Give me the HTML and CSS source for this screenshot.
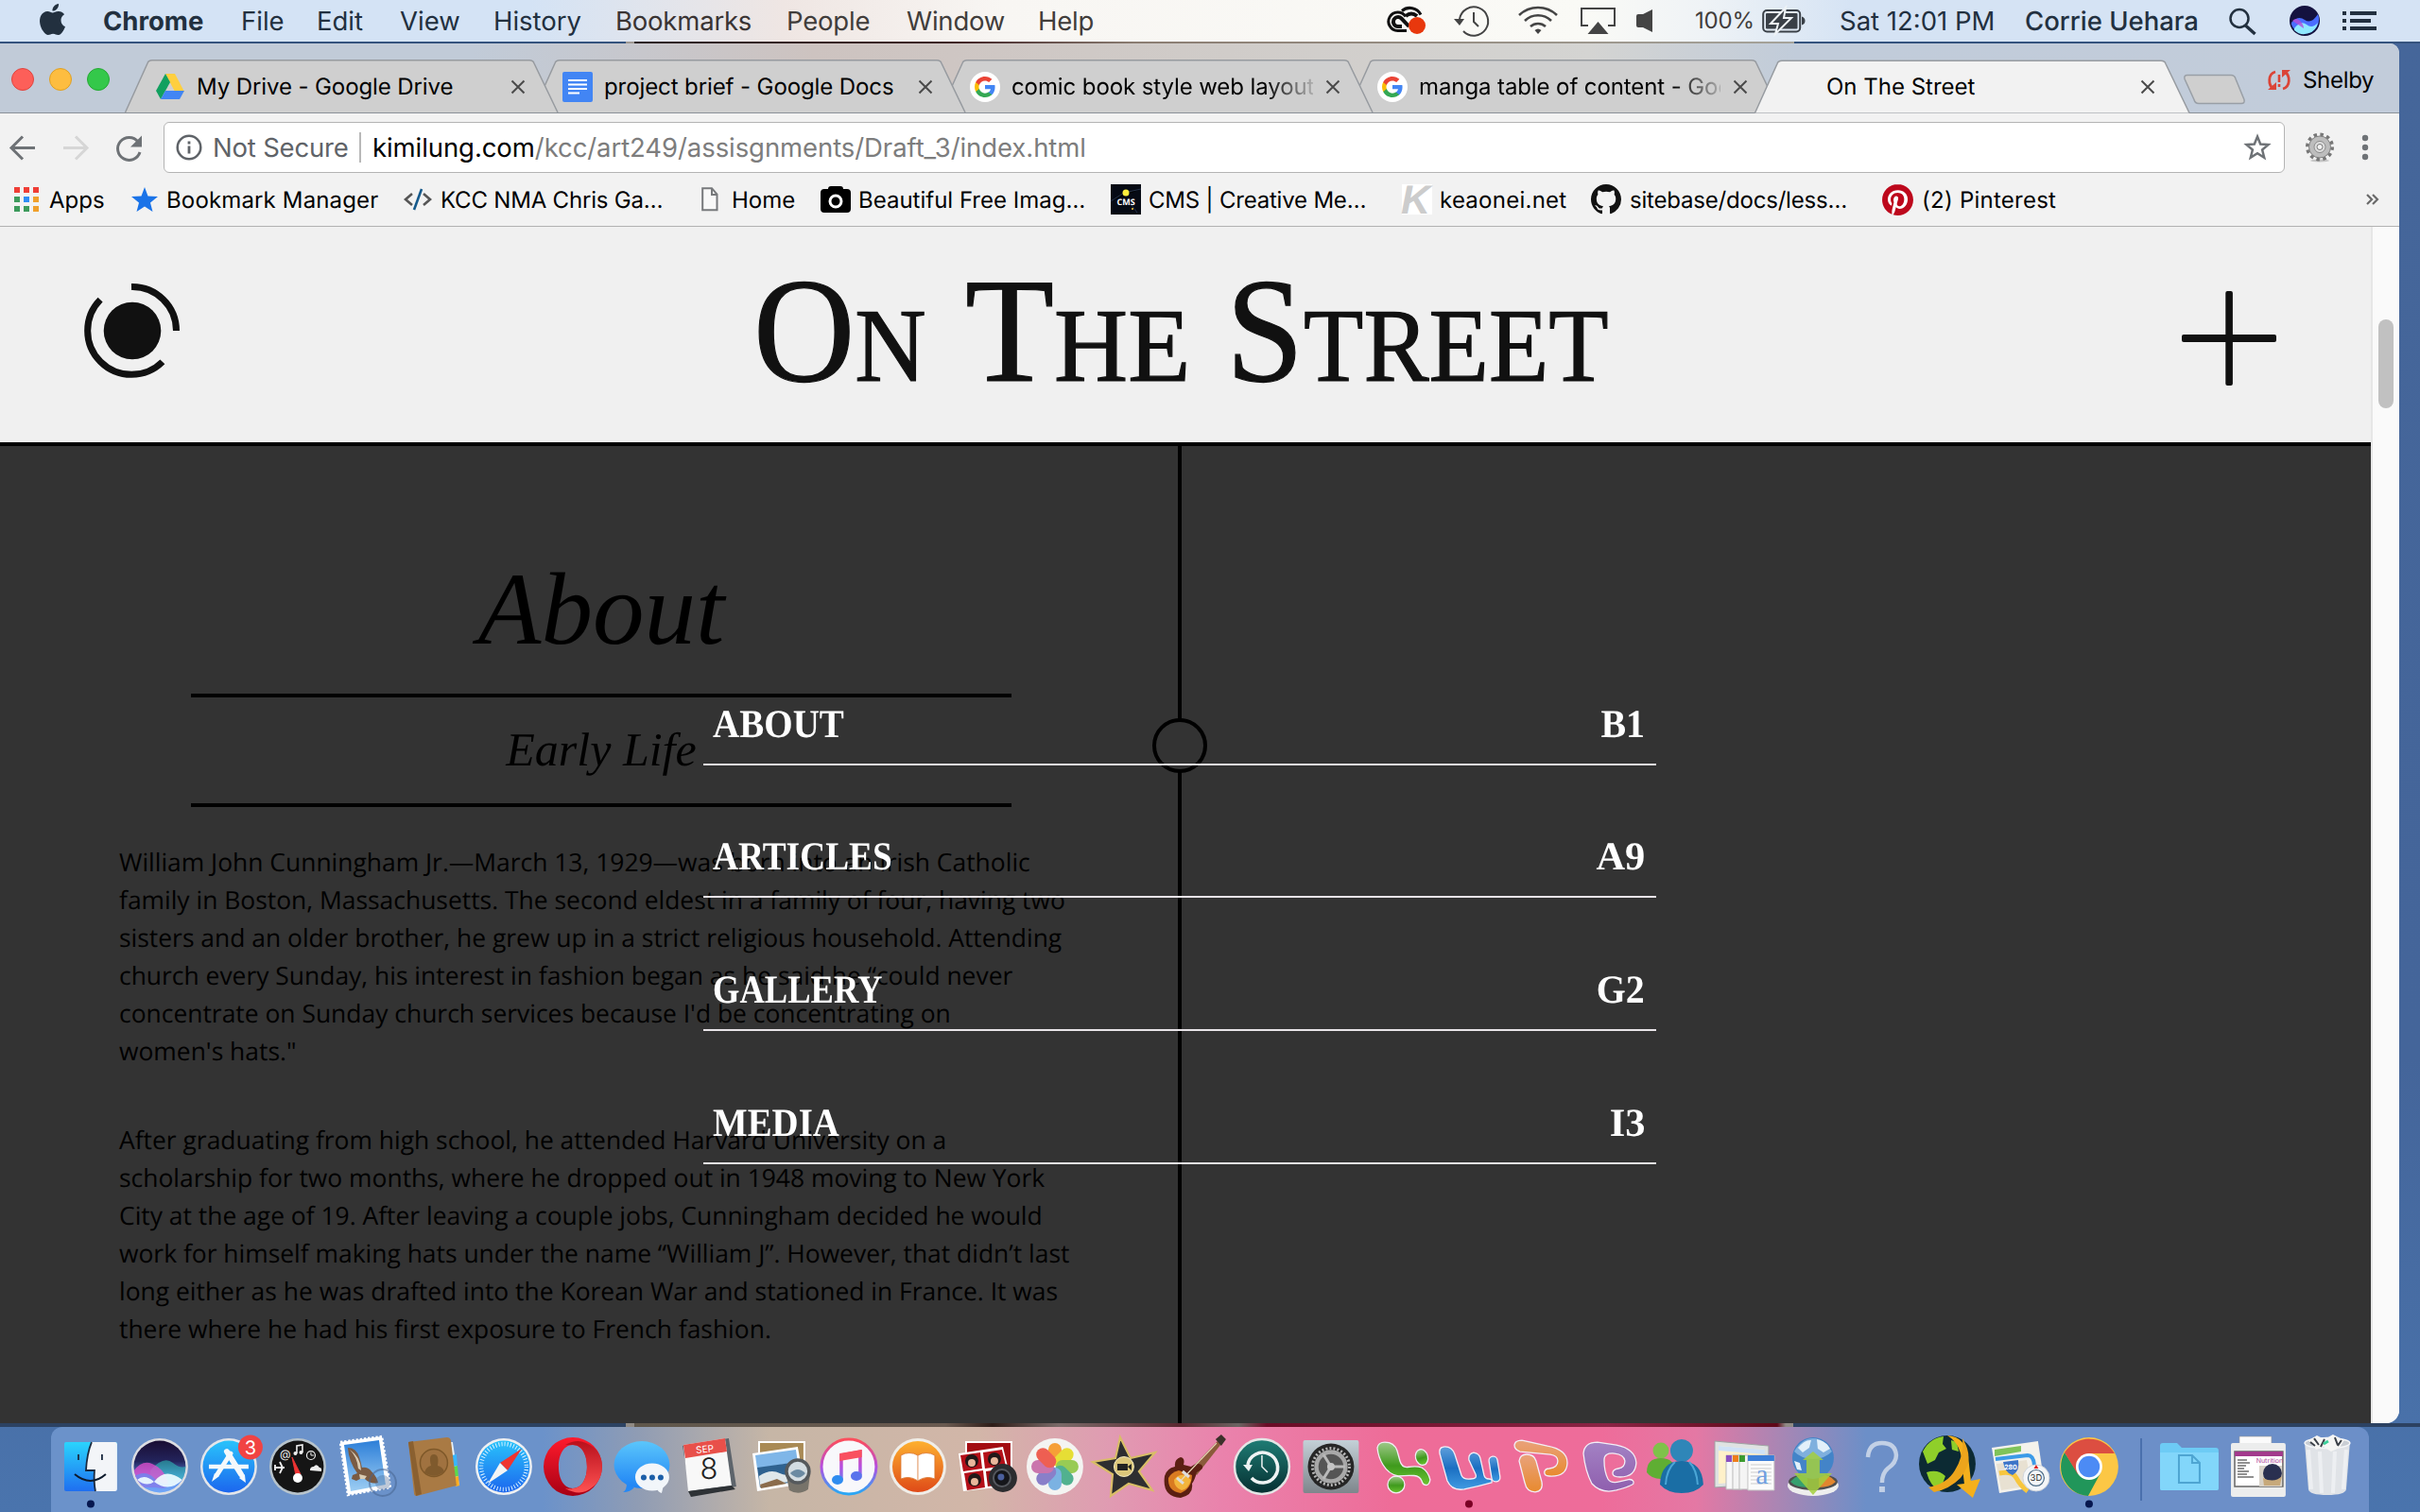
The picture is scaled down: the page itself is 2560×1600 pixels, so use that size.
FILE: index.html
```html
<!DOCTYPE html>
<html lang="en">
<head>
<meta charset="utf-8">
<title>On The Street</title>
<link rel="stylesheet" href="styles.css">
</head>
<body>
<div class="desktop">
  <header class="menubar">
    <svg class="apple" viewBox="2.3 0 19.4 24" width="27" height="33"><path fill="#22303f" d="M12.152 6.896c-.948 0-2.415-1.078-3.96-1.04-2.04.027-3.91 1.183-4.961 3.014-2.117 3.675-.546 9.103 1.519 12.09 1.013 1.454 2.208 3.09 3.792 3.039 1.52-.065 2.09-.987 3.935-.987 1.831 0 2.35.987 3.96.948 1.637-.026 2.676-1.48 3.676-2.948 1.156-1.688 1.636-3.325 1.662-3.415-.039-.013-3.182-1.221-3.22-4.857-.026-3.04 2.48-4.494 2.597-4.559-1.429-2.09-3.623-2.324-4.39-2.376-2-.156-3.675 1.09-4.61 1.09zM15.53 3.83c.843-1.012 1.4-2.427 1.245-3.83-1.207.052-2.662.805-3.532 1.818-.78.896-1.454 2.338-1.273 3.714 1.338.104 2.715-.688 3.559-1.701"/></svg>
    <span class="app">Chrome</span><span>File</span><span>Edit</span><span>View</span><span>History</span><span class="mid">Bookmarks</span><span class="warm">People</span><span class="warm">Window</span><span class="warm">Help</span>
    <svg width="44" height="44" viewBox="0 0 44 44"><g fill="none" stroke="#111" stroke-width="3"><path d="M22 32.500H12.500A9.800 9.800 0 1 1 21 17.500"/><path d="M17 11.500a13 13 0 0 1 20 4"/><path d="M21 17q6-5 12 0" stroke-width="4"/><path d="M17 28h-4a5 5 0 1 1 3.500-8.500l8 8.500" stroke-width="4"/></g><circle cx="33" cy="27" r="9" fill="#e8380d"/></svg>
    <svg width="44" height="44" viewBox="0 0 44 44"><path d="M7 20a15.200 15.200 0 1 1 4 13" fill="none" stroke="#444" stroke-width="2"/><path d="M1 20h11l-5 7z" fill="#444"/><path d="M22 13v10l5 5" fill="none" stroke="#444" stroke-width="2"/></svg>
    <svg width="44" height="44" viewBox="0 0 44 44"><g fill="none" stroke="#444" stroke-width="2.600"><path d="M2 16a29 29 0 0 1 40 0M8 22a20 20 0 0 1 28 0M14 28a12 12 0 0 1 16 0"/></g><path d="M18.500 32q3.500-3 7 0L22 36z" fill="#444"/></svg>
    <svg width="44" height="44" viewBox="0 0 44 44"><path d="M9 27H2V9h35v18h-7" fill="none" stroke="#444" stroke-width="2"/><path d="M19.500 23l11 13h-22z" fill="#444"/></svg>
    <svg width="24" height="44" viewBox="0 0 24 44"><path d="M0 17q0-2 2-2h5l10-5v24l-10-5H2q-2 0-2-2z" fill="#444"/></svg>
    <span class="pct">100%</span>
    <svg width="48" height="44" viewBox="0 0 48 44"><rect x="1.200" y="11" width="39" height="22.500" rx="4" fill="none" stroke="#3a4047" stroke-width="2"/><rect x="4" y="14" width="33.500" height="16.500" rx="1" fill="#3a4047"/><path d="M25 8L9 25h8l-3 11 17-17h-8z" fill="#3a4047" stroke="#eff3f6" stroke-width="2"/><path d="M42 17.500q3.500 1 3.500 4.500T42 26.500z" fill="#3a4047"/></svg>
    <span>Sat 12:01 PM</span><span class="user">Corrie Uehara</span>
    <svg width="36" height="44" viewBox="0 0 36 44"><circle cx="12" cy="19.500" r="9.500" fill="none" stroke="#22303f" stroke-width="2.500"/><path d="M18.500 27l10 9" stroke="#22303f" stroke-width="3.400"/></svg>
    <svg width="34" height="44" viewBox="0 0 34 44"><circle cx="16" cy="22" r="16" fill="#14123f"/><path d="M2 24q7-8 14-3t14-6a15 15 0 0 1-28 11z" fill="#4a6dff"/><path d="M5 30q7-9 13-4t12-2a15 15 0 0 1-25 8z" fill="#8fe8ff"/><path d="M3 22q4-4 8 0t4 8z" fill="#b44cd8" opacity=".8"/></svg>
    <svg width="40" height="44" viewBox="0 0 40 44"><path d="M0 14h4M0 22h4M0 30h4M8 14h28M8 22h22M8 30h28" stroke="#22303f" stroke-width="4"/></svg>
  </header>
  <div class="seam"></div>

  <div class="window">
    <div class="tabstrip">
      <div class="lights"><i class="red"></i><i class="yellow"></i><i class="green"></i></div>
      <div class="tab t1"><svg class="shape" viewBox="0 0 460 56"><path d="M.5 56L24 4Q25 .8 29 .8H428Q432 .8 433 4L458 56"/></svg>
        <svg class="fav" viewBox="0 0 32 32"><path d="M11 2h10l10 19H21z" fill="#ffcf3f"/><path d="M11 2L1 20l5 9 10-18z" fill="#11a05f"/><path d="M11 20h20l-5 9H6z" fill="#4285f4"/></svg>
        <span class="title">My Drive - Google Drive</span><svg class="close" viewBox="0 0 16 16"><path d="M1.500 1.500l13 13M14.500 1.500l-13 13"/></svg></div>
      <div class="tab t2"><svg class="shape" viewBox="0 0 460 56"><path d="M.5 56L24 4Q25 .8 29 .8H428Q432 .8 433 4L458 56"/></svg>
        <svg class="fav" viewBox="0 0 32 32"><rect width="32" height="32" rx="2" fill="#4285f4"/><path d="M6 9h20M6 13.500h20M6 18h20M6 22.500h12" stroke="#fff" stroke-width="2"/></svg>
        <span class="title">project brief - Google Docs</span><svg class="close" viewBox="0 0 16 16"><path d="M1.500 1.500l13 13M14.500 1.500l-13 13"/></svg></div>
      <div class="tab t3"><svg class="shape" viewBox="0 0 460 56"><path d="M.5 56L24 4Q25 .8 29 .8H428Q432 .8 433 4L458 56"/></svg>
        <svg class="fav" viewBox="-4 -4 32 32"><circle cx="12" cy="12" r="16" fill="#fff"/><use href="#g"/></svg>
        <span class="title fade">comic book style web layout</span><svg class="close" viewBox="0 0 16 16"><path d="M1.500 1.500l13 13M14.500 1.500l-13 13"/></svg></div>
      <div class="tab t4"><svg class="shape" viewBox="0 0 460 56"><path d="M.5 56L24 4Q25 .8 29 .8H428Q432 .8 433 4L458 56"/></svg>
        <svg class="fav" viewBox="-4 -4 32 32"><circle cx="12" cy="12" r="16" fill="#fff"/><g id="g"><path fill="#4285F4" d="M22.560 12.250c0-.78-.07-1.530-.2-2.250H12v4.260h5.920c-.26 1.370-1.040 2.530-2.210 3.310v2.770h3.570c2.080-1.920 3.280-4.740 3.280-8.090z"/><path fill="#34A853" d="M12 23c2.970 0 5.460-.98 7.280-2.660l-3.570-2.770c-.98.66-2.230 1.060-3.710 1.060-2.860 0-5.290-1.930-6.160-4.530H2.180v2.840C3.990 20.530 7.700 23 12 23z"/><path fill="#FBBC05" d="M5.840 14.090c-.22-.66-.35-1.360-.35-2.090s.13-1.430.35-2.090V7.070H2.180C1.430 8.550 1 10.220 1 12s.43 3.450 1.180 4.930l2.850-2.220.81-.62z"/><path fill="#EA4335" d="M12 5.380c1.620 0 3.060.56 4.210 1.640l3.150-3.150C17.450 2.090 14.970 1 12 1 7.700 1 3.990 3.470 2.180 7.070l3.660 2.840c.87-2.600 3.300-4.530 6.160-4.530z"/></g></svg>
        <span class="title fade">manga table of content - Goo</span><svg class="close" viewBox="0 0 16 16"><path d="M1.500 1.500l13 13M14.500 1.500l-13 13"/></svg></div>
      <div class="tab t5 active"><svg class="shape" viewBox="0 0 460 56"><path d="M.5 56L24 4Q25 .8 29 .8H430Q434 .8 435 4L460 56"/></svg>
        <span class="fav"></span>
        <span class="title">On The Street</span><svg class="close" viewBox="0 0 16 16"><path d="M1.500 1.500l13 13M14.500 1.500l-13 13"/></svg></div>
      <svg class="newtab" viewBox="0 0 68 34" width="68" height="34"><path d="M5 1.500h46q4 0 5 4l9 22q1 4-3 4H17q-4 0-5-4L2 5.500q-1-4 3-4z" fill="#cfcfcf" stroke="#999fa6" stroke-width="1.500"/></svg>
      <div class="profile"><svg viewBox="0 0 26 24" width="26" height="24"><g fill="none" stroke="#db4437" stroke-width="2.800"><path d="M9 3C1 5 1 17 7 21M17 21c8-2 8-14 2-18"/></g><path d="M1 22h9v-8zM25 1h-9v8z" fill="#db4437"/><path d="M13 6v8M13 16v3" stroke="#db4437" stroke-width="2.600"/></svg><span>Shelby</span></div>
    </div>

    <div class="toolbar">
      <svg class="navicons" viewBox="0 0 173 60" width="173" height="60"><g fill="none" stroke-width="3"><path d="M37 36.500H13M24 24.500l-12 12 12 12" stroke="#6e7276"/><path d="M67 36.500h24M80 24.500l12 12-12 12" stroke="#d6d6d6"/><path d="M146 30a12 12 0 1 0 2 11" stroke="#6e7276"/></g><path d="M150 23.500v12h-12z" fill="#6e7276"/></svg>
      <div class="omnibox">
        <svg class="info" viewBox="0 0 28 28" width="28" height="28"><circle cx="14" cy="14" r="12.300" fill="none" stroke="#5f6368" stroke-width="2.500"/><path d="M14 12.500v8M14 7.500v3" stroke="#5f6368" stroke-width="2.800"/></svg>
        <span class="secure">Not Secure</span><i class="bar"></i><span class="url"><b>kimilung.com</b>/kcc/art249/assisgnments/Draft_3/index.html</span>
        <svg class="star" viewBox="0 0 30 30" width="30" height="30"><path d="M15 3.500l3.200 8 8.300.6-6.400 5.400 2.100 8.200-7.200-4.500-7.200 4.500 2.100-8.200-6.400-5.400 8.300-.6z" fill="none" stroke="#6e7276" stroke-width="2.500"/></svg>
      </div>
      <svg class="gear" viewBox="0 0 32 32" width="32" height="32"><ellipse cx="16" cy="30" rx="10" ry="1.500" fill="#c4c4c4"/><circle cx="16" cy="15.500" r="13" fill="none" stroke="#777" stroke-width="4" stroke-dasharray="3.400 3.407"/><circle cx="16" cy="15.500" r="11.500" fill="#bdbdbd" stroke="#808080"/><circle cx="16" cy="15.500" r="6" fill="#dedede" stroke="#8a8a8a"/><circle cx="16" cy="15.500" r="3" fill="#f3f3f3" stroke="#777"/></svg>
      <svg class="dots" viewBox="0 0 8 30" width="8" height="30"><g fill="#6e7276"><circle cx="4" cy="5" r="3.200"/><circle cx="4" cy="15" r="3.200"/><circle cx="4" cy="25" r="3.200"/></g></svg>
    </div>

    <nav class="bookmarks">
      <svg viewBox="0 0 26 26" width="26" height="26"><path d="M0 0h6v6H0zM10 0h6v6h-6zM20 0h6v6h-6z" fill="#ef3e36"/><path d="M0 10h6v6H0zM0 20h6v6H0zM10 20h6v6h-6z" fill="#3d9b5c"/><path d="M10 10h6v6h-6z" fill="#2e8df5"/><path d="M20 10h6v6h-6zM20 20h6v6h-6z" fill="#f0a02c"/></svg><span>Apps</span>
      <svg viewBox="0 0 28 26" width="28" height="26"><path d="M14 0l3.500 9.500L28 10l-8 6.500L22.500 26 14 20.500 5.500 26 8 16.500 0 10l10.500-.5z" fill="#1a73e8"/></svg><span class="mgr">Bookmark Manager</span>
      <svg viewBox="0 0 30 24" width="30" height="24"><path d="M9 6l-7 6 7 6M21 6l7 6-7 6" fill="none" stroke="#555" stroke-width="2.600"/><path d="M19 1l-8 22" stroke="#165a8c" stroke-width="2.600"/></svg><span class="tight">KCC NMA Chris Ga…</span>
      <svg viewBox="0 0 18 26" width="18" height="26"><path d="M1.200 1.200h9.800l5.500 6.500v16.500H1.200zM11 1v7h6" fill="#f8f8f8" stroke="#77797c" stroke-width="2"/></svg><span>Home</span>
      <svg viewBox="0 0 32 28" width="32" height="28"><path d="M8 3q0-3 3-3h10q3 0 3 3h4q4 0 4 4v17q0 4-4 4H4q-4 0-4-4V7q0-4 4-4z" fill="#000"/><circle cx="16" cy="16" r="6" fill="none" stroke="#fff" stroke-width="3"/></svg><span>Beautiful Free Imag…</span>
      <svg viewBox="0 0 32 32" width="32" height="32"><rect width="32" height="32" fill="#060a14"/><path d="M0 18l14-9 18-4M22 22l6 8" stroke="#26334a"/><circle cx="16" cy="9" r="3.500" fill="#ffee3b"/><circle cx="23" cy="26" r="1" fill="#ffcc3b"/><text x="16" y="21.500" class="cms">CMS</text></svg><span class="tight">CMS | Creative Me…</span>
      <svg viewBox="0 0 32 32" width="32" height="32"><rect width="32" height="32" fill="#fff"/><text x="-1" y="31" class="kay">K</text></svg><span class="loose">keaonei.net</span>
      <svg viewBox="0 0 16 16" width="32" height="32"><path fill="#111" d="M8 0C3.580 0 0 3.580 0 8c0 3.540 2.290 6.530 5.470 7.590.4.07.55-.17.55-.38 0-.19-.01-.82-.01-1.490-2.010.37-2.530-.49-2.690-.94-.09-.23-.48-.94-.82-1.130-.28-.15-.68-.52-.01-.53.63-.01 1.080.58 1.230.82.72 1.210 1.870.87 2.330.66.07-.52.28-.87.51-1.070-1.780-.2-3.640-.89-3.640-3.950 0-.87.31-1.590.82-2.150-.08-.2-.36-1.020.08-2.120 0 0 .67-.21 2.200.82.64-.18 1.320-.27 2-.27.68 0 1.360.09 2 .27 1.530-1.040 2.200-.82 2.200-.82.44 1.100.16 1.920.08 2.120.51.56.82 1.270.82 2.150 0 3.070-1.870 3.750-3.650 3.950.29.25.54.73.54 1.480 0 1.070-.01 1.930-.01 2.200 0 .21.15.46.55.38A8.013 8.013 0 0016 8c0-4.420-3.580-8-8-8z"/></svg><span class="tight">sitebase/docs/less…</span>
      <svg viewBox="0 0 24 24" width="33" height="33"><circle cx="12" cy="12" r="11" fill="#fff"/><path fill="#bd081c" d="M12.017 0C5.396 0 .029 5.367.029 11.987c0 5.079 3.158 9.417 7.618 11.162-.105-.949-.199-2.403.041-3.439.219-.937 1.406-5.957 1.406-5.957s-.359-.72-.359-1.781c0-1.663.967-2.911 2.168-2.911 1.024 0 1.518.769 1.518 1.688 0 1.029-.653 2.567-.992 3.992-.285 1.193.6 2.165 1.775 2.165 2.128 0 3.768-2.245 3.768-5.487 0-2.861-2.063-4.869-5.008-4.869-3.410 0-5.409 2.562-5.409 5.199 0 1.033.394 2.143.889 2.741.099.12.112.225.085.345-.09.375-.293 1.199-.334 1.363-.053.225-.172.271-.401.165-1.495-.69-2.433-2.878-2.433-4.646 0-3.776 2.748-7.252 7.920-7.252 4.158 0 7.392 2.967 7.392 6.923 0 4.135-2.607 7.462-6.233 7.462-1.214 0-2.354-.629-2.758-1.379l-.749 2.848c-.269 1.045-1.004 2.352-1.498 3.146 1.123.345 2.306.535 3.550.535 6.607 0 11.985-5.365 11.985-11.987C23.970 5.390 18.592.026 11.985.026L12.017 0z"/></svg><span class="loose">(2) Pinterest</span>
      <svg viewBox="0 0 14 12" width="14" height="12"><path d="M1 1l5 5-5 5M7 1l5 5-5 5" fill="none" stroke="#6a6a6a" stroke-width="2.200"/></svg>
    </nav>

    <div class="viewport">
      <main class="page">
        <header class="masthead">
          <svg class="logo" viewBox="-52 -52 104 104" width="104" height="104"><circle cx="1" r="30.300" fill="#111"/><path d="M0-46.500A46.500 46.500 0 0 1 47.500 0M33-1" fill="none" stroke="#111" stroke-width="7"/><path d="M32.880 32.880A46.500 46.500 0 0 1-32.880-32.880" fill="none" stroke="#111" stroke-width="7"/></svg>
          <h1><span class="w1">On</span><span class="w2">The</span><span class="w3">Street</span></h1>
          <svg class="plus" viewBox="0 0 100 100" width="100" height="100"><rect y="46" width="100" height="8" rx="2" fill="#111"/><rect x="46.300" width="7.600" height="100" rx="2" fill="#111"/></svg>
        </header>
        <section class="spread">
          <article class="about">
            <h2><span>About</span></h2>
            <h3><span>Early Life</span></h3>
            <p>William John Cunningham Jr.—March 13, 1929—was born into an Irish Catholic<br>family in Boston, Massachusetts. The second eldest in a family of four, having two<br>sisters and an older brother, he grew up in a strict religious household. Attending<br>church every Sunday, his interest in fashion began as he said he “could never<br>concentrate on Sunday church services because I'd be concentrating on<br>women's hats."</p>
            <p>After graduating from high school, he attended Harvard University on a<br>scholarship for two months, where he dropped out in 1948 moving to New York<br>City at the age of 19. After leaving a couple jobs, Cunningham decided he would<br>work for himself making hats under the name “William J”. However, that didn’t last<br>long either as he was drafted into the Korean War and stationed in France. It was<br>there where he had his first exposure to French fashion.</p>
          </article>
          <div class="spine"><i></i></div>
          <ul class="menu">
            <li><span class="l1">ABOUT</span><span class="num">B1</span></li>
            <li><span class="l2">ARTICLES</span><span class="num wide">A9</span></li>
            <li><span class="l3">GALLERY</span><span class="num">G2</span></li>
            <li><span class="l4">MEDIA</span><span class="num wide">I3</span></li>
          </ul>
        </section>
      </main>
      <div class="scrollbar"><i></i></div>
    </div>
  </div>
  <div class="backdrop"></div>

  <footer class="dock">
    <svg viewBox="-36 -42 73 90"><defs><linearGradient id="fb" x2="0" y2="1"><stop stop-color="#2ad4fd"/><stop offset="1" stop-color="#1f6ff0"/></linearGradient><linearGradient id="blu" x2="0" y2="1"><stop stop-color="#29c3fb"/><stop offset="1" stop-color="#1c66ee"/></linearGradient></defs><rect x="-28" y="-26" width="56" height="52" rx="2" fill="url(#fb)"/><path d="M1-26h25q2 0 2 2v48q0 2-2 2H5Q3 16 4 4h-9Q-4-14 1-26z" fill="#f3f5f8"/><path d="M1-26Q-4-14-5 4h9q-1 12 1 22M-13-13v6M12-13v6" fill="none" stroke="#1a2a40" stroke-width="1.800"/><path d="M-17 8q17 14 33 0" fill="none" stroke="#0d1a2b" stroke-width="2"/><circle cy="39.500" r="4" fill="#06174f"/></svg>
    <svg viewBox="-36 -42 73 90"><defs><linearGradient id="si" x2="0" y2="1"><stop stop-color="#1a0d33"/><stop offset=".4" stop-color="#23245c"/><stop offset=".65" stop-color="#4f74c8"/><stop offset="1" stop-color="#9fe6ff"/></linearGradient><clipPath id="sic"><circle r="27.500"/></clipPath></defs><circle r="30" fill="#dcdde2"/><circle r="27.500" fill="url(#si)"/><g clip-path="url(#sic)"><path d="M-10 4Q4-12 14-4T30-2V14H-10z" fill="#2fc7c0" opacity=".55"/><path d="M-30 8Q-20-8-8-3T8 14-4 22H-30z" fill="#e64fd0" opacity=".75"/><path d="M-30 12q14-10 24 0T16 16t14 0v16h-60z" fill="#5f8df5" opacity=".7"/><path d="M-24 14q8-7 18 2 12-16 30-2-14 14-30 2-8 6-18-2z" fill="#eefcff" opacity=".92"/></g></svg>
    <svg viewBox="-36 -42 73 90"><circle r="30" fill="#e4e6ea"/><circle r="27.500" fill="url(#blu)"/><g stroke="#f4f8fb" stroke-linecap="round"><path d="M-21 0h42" stroke-width="4.500" stroke-linecap="butt"/><path d="M2-14l-14 22" stroke-width="5"/><path d="M-2-16l15 24" stroke-width="6"/></g><path d="M-15 7l5 3-8 6zM17 8l-6 4 7 5z" fill="#f4f8fb"/><circle cx="23" cy="-20.500" r="13" fill="#f14343"/><text x="23" y="-13.500" class="badge">3</text></svg>
    <svg viewBox="-36 -42 73 90"><circle r="30" fill="#b7c3cb"/><circle r="27.500" fill="#151515"/><path d="M-6-10L3 8l-5 1z" fill="#e33" stroke="#e33"/><circle cy="12" r="5" fill="#fff"/><g fill="#eee"><path d="M-1-14v-8l6-1v8" fill="none" stroke="#eee" stroke-width="1.600"/><circle cx="-2.500" cy="-14" r="2"/><circle cx="3.500" cy="-15" r="2"/><text x="-19" y="-9" class="at">@</text><circle cx="14" cy="-12" r="4.500" fill="none" stroke="#eee" stroke-width="1.200"/><path d="M14-15v3h3" fill="none" stroke="#eee"/><path d="M13 4q0-4 4-4 3-4 6 1 3 0 2 4z"/><path d="M-25 1h11M-19-5l3 6-3 6M-24-2v6" fill="none" stroke="#eee" stroke-width="1.800"/></g></svg>
    <svg viewBox="-36 -42 73 90"><defs><linearGradient id="sky" x2="0" y2="1"><stop stop-color="#2d7fd8"/><stop offset="1" stop-color="#9ccdf3"/></linearGradient></defs><path d="M-28-26L16-32 25 22-20 30z" fill="#fff" stroke="#fff" stroke-width="2.500" stroke-dasharray="2.400 1.800"/><path d="M-24-23L13-28 20 19-17 26z" fill="url(#sky)"/><path d="M-20-20q9 0 12 10 2 6 3 11 6-1 10 4 6 6 7 12-8 2-14-4l-3-1-6 3-5-2 1-4 5-2q-9-12-10-27z" fill="#7a5b43"/><path d="M-18-18q8 8 9 20l3 2q0-14-12-22zM-8 8l8 2-2 3-5 0z" fill="#d9cbb3"/><circle cx="17" cy="17" r="14" fill="none" stroke="#47658f" stroke-width="2" opacity=".55"/><circle cx="17" cy="17" r="8" fill="#47658f" opacity=".35"/></svg>
    <svg viewBox="-36 -42 73 90"><path d="M14-26h5l7 46h-7z" fill="#e8f0f4"/><path d="M18-12l5-1 1 12-4 1z" fill="#38b6ff"/><path d="M20 0l4-1 1 11-4 1z" fill="#5bd94e"/><path d="M21 11l4-1 1 10-4 1z" fill="#ffad1f"/><path d="M-28-26L13-31q3 0 4 3l6 48-42 11q-3 0-3-3z" fill="#a97a44"/><path d="M-20 31l-8-57 5-1 9 56z" fill="#8a6030"/><circle cx="-1" cy="-4" r="14.500" fill="#a07240" stroke="#7e5829" stroke-width="1.500"/><path d="M-11 6q2-6 7-7-3-12 3-12t4 12q5 1 7 6-10 9-21 1z" fill="#7f5a2d"/></svg>
    <svg viewBox="-36 -42 73 90"><circle r="30" fill="#eef0f2"/><circle r="27.500" fill="url(#blu)"/><circle r="24" fill="none" stroke="#d8f1ff" stroke-width="4.500" stroke-dasharray="1 2.140"/><path d="M19-19L4 4-4-4z" fill="#f0342f"/><path d="M-17 18L-4-4 4 4z" fill="#f4f4f4"/></svg>
    <svg viewBox="-36 -42 73 90"><defs><linearGradient id="op" x2="0" y2="1"><stop stop-color="#ff1b2d"/><stop offset="1" stop-color="#a70014"/></linearGradient><linearGradient id="op2" x2="0" y2="1"><stop stop-color="#b8101c"/><stop offset="1" stop-color="#ff5252"/></linearGradient></defs><path fill-rule="evenodd" d="M0-31A31 31 0 1 0 0 31 31 31 0 1 0 0-31zM0-23C10-23 15-12 15 0S10 23 0 23-15 12-15 0-10-23 0-23z" fill="url(#op)"/><path d="M-8-23Q4-30 14-25 31-18 31 0 31 18 14 26 4 30-8 23-2 24 0 23C10 23 15 12 15 0S10-23 0-23Q-4-23-8-23z" fill="url(#op2)"/></svg>
    <svg viewBox="-36 -42 73 90"><defs><linearGradient id="ms" x2="0" y2="1"><stop stop-color="#5bc6fb"/><stop offset="1" stop-color="#1f83f5"/></linearGradient></defs><path d="M-16 18q0 7-4 9 8 0 12-5z" fill="#2488f5"/><ellipse cy="-2" rx="29.500" ry="25" fill="url(#ms)"/><ellipse cx="11" cy="11" rx="18" ry="14.500" fill="#f2f6fa"/><path d="M16 23q1 4 5 5l2-8z" fill="#f2f6fa"/><g fill="#1c5fa8"><circle cx="2" cy="11.500" r="3"/><circle cx="11" cy="11.500" r="3"/><circle cx="20" cy="11.500" r="3"/></g></svg>
    <svg viewBox="-36 -42 73 90"><path d="M-30-22l49-8 8 51-48 9z" fill="#5d646b"/><path d="M-29-23l44-7 7 50-46 6z" fill="#f8f8f8"/><path d="M-29-23l44-7 2 14-44 7z" fill="#e8504a"/><text x="-6" y="-15" class="sep" transform="rotate(-6 -6 -15)">SEP</text><text x="-2" y="13" class="day">8</text><path d="M-24 26l46-6 4 4-47 8z" fill="#2e3236"/></svg>
    <svg viewBox="-36 -42 73 90"><path d="M-22-26h48v40h-48z" fill="#a98a55" stroke="#fff" stroke-width="2"/><path d="M-29-14L19-21 26 18-24 26z" fill="#fff"/><path d="M-26-12L17-18 19-5-24 2z" fill="#7fb6e8"/><path d="M-24 1L19-5 22 15-21 22z" fill="#2f6290"/><path d="M-22 10q12-8 22-3t20-5l2 12-43 7z" fill="#dfe7ea"/><path d="M-21 19l18-6 10 5-27 5z" fill="#8b6c4c"/><path d="M7 10q14 6 25-2l-2 16q-10 7-20 1z" fill="#77736a"/><circle cx="19" cy="5" r="12" fill="#d4dde2" stroke="#55595c" stroke-width="3.500"/><path d="M11 7q8-8 16 0-7 9-16 0z" fill="#6b8aa2"/></svg>
    <svg viewBox="-36 -42 73 90"><defs><linearGradient id="it" gradientUnits="userSpaceOnUse" x1="0" y1="-28" x2="0" y2="28"><stop stop-color="#fb4d5c"/><stop offset=".5" stop-color="#b74ee0"/><stop offset="1" stop-color="#2aa7f5"/></linearGradient></defs><circle r="29" fill="#f8f8fb" stroke="url(#it)" stroke-width="3"/><path d="M-8 14V-12L12-16V9" fill="none" stroke="url(#it)" stroke-width="3.500"/><path d="M-9.700-14L13.700-18v8L-9.700-6z" fill="#f9505f"/><ellipse cx="-12" cy="14" rx="6" ry="5" fill="#2f8cf0"/><ellipse cx="8" cy="10" rx="6" ry="5" fill="#5a73ec"/></svg>
    <svg viewBox="-36 -42 73 90"><defs><linearGradient id="ib" x2="0" y2="1"><stop stop-color="#fdb02f"/><stop offset="1" stop-color="#df4a18"/></linearGradient></defs><circle r="30" fill="#f0eee9"/><circle r="27" fill="url(#ib)"/><path d="M0-12q-9-5-18 0v25q9-4 18 2 9-6 18-2v-25q-9-5-18 0zv26" fill="#fff" stroke="#d9732c" stroke-width=".8"/></svg>
    <svg viewBox="-36 -42 73 90"><path d="M-22-26h48v32h-48z" fill="#a30d12" stroke="#fff" stroke-width="2"/><path d="M-30-14L17-21 27 20-25 26z" fill="#fff"/><path d="M-28-12l21-3 2 17-20 3zM-4-15l20-3 4 17-22 3zM-24 7l20-3 2 18-19 3z" fill="#b40f18"/><path d="M-1 5l20-3 4 16-22 3z" fill="#a00d14"/><g fill="#221818"><circle cx="-16" cy="-6" r="7"/><circle cx="8" cy="-8" r="7"/><circle cx="-13" cy="14" r="7"/></g><g fill="#e9b79b"><circle cx="-16" cy="-4" r="4"/><circle cx="8" cy="-6" r="4"/><circle cx="-13" cy="16" r="4"/></g><circle cx="17" cy="12" r="15" fill="#2b2c2f"/><circle cx="16" cy="12" r="9" fill="#15161a" stroke="#55585e" stroke-width="2"/><circle cx="15" cy="11" r="3.500" fill="#4b5f9c"/></svg>
    <svg viewBox="-36 -42 73 90"><circle r="30" fill="#f4f4f2"/><g opacity=".88"><rect x="-7" y="-25" width="14" height="24" rx="7" fill="#f7941e"/><rect x="-7" y="-25" width="14" height="24" rx="7" fill="#e5dc1b" transform="rotate(45)"/><rect x="-7" y="-25" width="14" height="24" rx="7" fill="#8cc63f" transform="rotate(90)"/><rect x="-7" y="-25" width="14" height="24" rx="7" fill="#3ba882" transform="rotate(135)"/><rect x="-7" y="-25" width="14" height="24" rx="7" fill="#6ba9e0" transform="rotate(180)"/><rect x="-7" y="-25" width="14" height="24" rx="7" fill="#7b6fc4" transform="rotate(225)"/><rect x="-7" y="-25" width="14" height="24" rx="7" fill="#c564a4" transform="rotate(270)"/><rect x="-7" y="-25" width="14" height="24" rx="7" fill="#ee4b3c" transform="rotate(315)"/></g></svg>
    <svg viewBox="-36 -42 73 90"><path d="M-4-31L7-9 33-15 16 5 30 25 5 18-14 31-12 8-33-5-9-9z" fill="#2e2e30" stroke="#d9bd67" stroke-width="2.200"/><circle r="10.500" fill="#dcc77a" stroke="#f4eac0"/><path d="M-7-3H4v7H-7zM4 0l4-3v7z" fill="#222"/></svg>
    <svg viewBox="-36 -42 73 90"><path d="M-2 2L26-27l4 3L4 9z" fill="#8a5a3a"/><path d="M24-29l6-5 5 5-5 7z" fill="#3b302a"/><path d="M-30 10q2-8 11-10-1-8 6-10 5 1 3 8l8 2q6-5 11-2 4 4-5 8-2 8-5 12 2 12-12 15-20-1-17-23z" fill="#5b1f12"/><path d="M-26 12q3-6 11-8l14 5q0 14-12 19-14-2-13-16z" fill="#d97b21"/><path d="M-20 14q4-6 12-5l6 5q-3 10-10 11-8-3-8-11z" fill="#f3b53c"/><path d="M-14 16L25-25" stroke="#e8d6b8" stroke-width="1.200"/><path d="M-17 12l7 6M-11 5l7 6" stroke="#ddd" stroke-width="3"/></svg>
    <svg viewBox="-36 -42 73 90"><defs><linearGradient id="tm" x2="0" y2="1"><stop stop-color="#1f7d75"/><stop offset="1" stop-color="#052e30"/></linearGradient></defs><circle r="29" fill="url(#tm)" stroke="#e4e6e6" stroke-width="2.500"/><path d="M-15-2A16 16 0 1 1-11 12" fill="none" stroke="#eef3f3" stroke-width="3.600"/><path d="M-20-2h10l-4 7z" fill="#eef3f3"/><path d="M0-12V0l6 6" fill="none" stroke="#eef3f3" stroke-width="1.500"/></svg>
    <svg viewBox="-36 -42 73 90"><defs><linearGradient id="sp" x2="0" y2="1"><stop stop-color="#c4d0d7"/><stop offset="1" stop-color="#7e868c"/></linearGradient></defs><rect x="-29.500" y="-28" width="59" height="56" rx="2" fill="url(#sp)"/><circle r="24.500" fill="#262626"/><circle r="19.500" fill="none" stroke="#b6b6b6" stroke-width="3" stroke-dasharray="2 2.080"/><circle r="15.500" fill="#555" stroke="#a8a8a8" stroke-width="4.500"/><path d="M0 0h15M0 0l-8-13M0 0l-8 13" stroke="#b9b9b9" stroke-width="3"/><circle r="4" fill="#c4c4c4"/></svg>
    <svg class="office" viewBox="-36 -42 73 90"><defs><linearGradient id="ex" x2="0" y2="1"><stop stop-color="#9fc98a"/><stop offset=".55" stop-color="#3f9a1c"/><stop offset="1" stop-color="#6cc432"/></linearGradient></defs><g fill="url(#ex)"><path d="M-24-20Q-23-26-16-26-6-26-3-17L0-6Q2 1 8 .5 18-1 23 1 30 5 32 14 31 20 27 19.500 24 19 23 15 21 10 15 9.500 8 9-2 10-12 8-18-2-23-10-24-20z"/><ellipse cx="23" cy="-10" rx="6.500" ry="8.500" transform="rotate(-15 23 -10)"/><circle cx="-4" cy="19" r="9"/></g></svg>
    <svg class="office" viewBox="-36 -42 73 90"><defs><linearGradient id="wo" x2="0" y2="1"><stop stop-color="#5f9fdb"/><stop offset=".5" stop-color="#1b6fc2"/><stop offset="1" stop-color="#3f9be2"/></linearGradient></defs><g fill="url(#wo)"><path d="M-31-14Q-32-20-27-21-18-22-15-13L-8 9Q-6 14 2 13 9 13 7 8L0-7Q-1-14 5-15 11-14 12-9L16 9Q17 13 21 13 25 13 24 17 10 21-5 24-18 26-23 15z"/><rect x="22.500" y="-11" width="9" height="27" rx="4.500" transform="rotate(-9 27 2)"/></g><circle class="dot" cy="39.500" r="4" fill="#7a0024"/></svg>
    <svg class="office" viewBox="-36 -42 73 90"><defs><linearGradient id="pp" x2="0" y2="1"><stop stop-color="#e9a27c"/><stop offset="1" stop-color="#e88a2e"/></linearGradient></defs><g fill="url(#pp)"><path d="M-25-23Q-24-28-17-28L10-22Q32-18 31-3 30 11 12 10 6 10 7 5 8 2 12 2 21 1 21-6 21-12 13-13L-19-16Q-25-18-25-23z"/><path d="M-20-6Q-19-13-12-13-4-13-2-6L4 16Q6 26-3 27-12 27-14 17z"/></g></svg>
    <svg class="office" viewBox="-36 -42 73 90"><defs><linearGradient id="en" x2="0" y2="1"><stop stop-color="#a382c4"/><stop offset="1" stop-color="#8f5fae"/></linearGradient></defs><path fill="url(#en)" d="M-25-14Q-24-26-10-26L10-23Q30-19 31-4 30 11 14 11 6 11 6 7 6 3 12 2 19 1 19-6 18-13 8-14-3-15-3-7-3 5 1 13 4 18 13 16L24 13.500Q29 14 28 18 27 20 10 25-6 29-16 18-23 5-25-14z"/></svg>
    <svg viewBox="-36 -42 73 90"><circle cx="-15" cy="-17" r="8.500" fill="#7fc24a"/><path d="M-30 6q0-15 15-15T0 6q-6 8-15 7-10 0-15-7z" fill="#5fae33"/><circle cx="7" cy="-17" r="12" fill="#2f86b8"/><path d="M-16 19Q-15-6 7-6 29-5 30 19 22 28 7 28t-23-9z" fill="#1a6ea5"/><path d="M0-5q-9 8-10 24M15-5q8 8 9 24" stroke="#4ba6d6" stroke-width="2" fill="none"/></svg>
    <svg viewBox="-36 -42 73 90"><path d="M-31-27L26-22v40l-57 4z" fill="#dfe2e2" stroke="#9fa3a3"/><path d="M-27-22l49 4v32l-49 4z" fill="#fff1c9"/><path d="M-27-22l49 4v5l-49-4z" fill="#cfe2f7"/><path d="M-19-12h16v36h-16z" fill="#f7f7f7" stroke="#bbb"/><path d="M-12-12h10v36h-10z" fill="#f4f4f4" stroke="#bbb"/><path d="M-5-12h10v36h-10z" fill="#f4f4f4" stroke="#bbb"/><path d="M-19-12h6v7h-6z" fill="#8a4fc0"/><path d="M-12-12h6v7h-6z" fill="#ef7d1a"/><path d="M-5-12h6v7h-6z" fill="#3b9b2f"/><path d="M4-12h28v37H4z" fill="#fbfbfb" stroke="#c4c4c4"/><path d="M4-12h28v6H4z" fill="#3c7fd8"/><path d="M7-2h22M7 2h22M7 6h22M7 10h22M7 14h22M7 18h22" stroke="#ccc"/><text x="19" y="18" class="aa">a</text></svg>
    <svg viewBox="-36 -42 73 90"><ellipse cy="20" rx="27" ry="11" fill="#eee"/><ellipse cy="16" rx="26" ry="9" fill="#4f4f4f"/><path d="M-24 16q6-8 18-8v14q-12 0-18-6z" fill="#36a06f"/><path d="M24 16q-6-8-18-8v14q12 0 18-6z" fill="#e2862f"/><circle cy="-9" r="22" fill="#4384c8"/><path d="M-20-16Q-12-30 0-30t20 14q-8 8-20 8t-20-8z" fill="#a9cdec" opacity=".6"/><path d="M-16-20q8-9 14-8l-2 8-7 5zM4-29q10 2 14 10l-7 4-6-4zM-20-6l6 2 2 8-5-1z" fill="#e2f0fa"/><path d="M0-16l11 9H7v14h13L0 30-20 7h13V-7h-4z" fill="#a3cf3e" opacity=".85"/></svg>
    <svg viewBox="-36 -42 73 90"><path d="M-15-10q1-15 15-15t15 13q0 8-9 14-6 5-6 15" fill="none" stroke="#c2d0e6" stroke-width="4.500"/><path d="M-3 21h6v6h-6z" fill="#c2d0e6"/></svg>
    <svg viewBox="-36 -42 73 90"><circle cx="-4" cy="-3" r="30" fill="#0c2a33"/><path d="M-30-16q7-14 22-16l-1 8 4 5-8 4-4 8-8 4zM-26 6q12-4 20 4l-6 16q-10-5-14-20zM0-28l6 2 2 10-7-2z" fill="#8fcf2a"/><path d="M-4-33Q14-32 18-12L21 15l10-2-8 20-17-14 8-1Q12 0 11-10 8-26-4-33z" fill="#f5b01c"/><path d="M12-30Q26-8 10 12-2 24-18 27l-6-5Q-4 18 4 4 14-12 12-30z" fill="#eda51c"/></svg>
    <svg viewBox="-36 -42 73 90"><path d="M-30-20L19-27 26 20-22 28z" fill="#f4f2ec"/><path d="M-27-18L1-22v6l-28 5z" fill="#7fc35a"/><path d="M-26-8L8-12q6 0 7 10l2 18" fill="none" stroke="#3c9be8" stroke-width="4"/><path d="M-25-3L7-7 12 20-20 25z" fill="#e8e1d2"/><path d="M-22 7q14-3 18 5t12 14" fill="none" stroke="#f7c63e" stroke-width="5"/><path d="M-18-5l16-2q2 12-6 16-8-2-10-14z" fill="#3c74c8"/><text x="-10" y="3" class="i280">280</text><circle cx="17" cy="12" r="14" fill="#f4f6f8" stroke="#cfd4d9"/><circle cx="17" cy="12" r="8.500" fill="none" stroke="#4b6b86" stroke-width="1.200"/><text x="17" y="15.500" class="d3">3D</text><path d="M17-2l2.500 4h-5z" fill="#d22"/></svg>
    <svg viewBox="-36 -42 73 90"><circle r="31" fill="#fcc745"/><path d="M-12 7L-26-15A31 31 0 0 0-1 31L12 7z" fill="#21965a"/><path d="M-26-15L-12 8 0-14H27A31 31 0 0 0-26-15z" fill="#dc4e41"/><circle r="14" fill="#fff"/><circle r="11.300" fill="#4c8bf5"/><circle cy="39.500" r="4" fill="#06174f"/></svg>
    <i class="divider"></i>
    <svg viewBox="-36 -42 73 90"><path d="M-31-22q0-3 3-3h15l5 5h36q3 0 3 3v40q0 2-2 2h-58q-2 0-2-2z" fill="#6dcbf5"/><path d="M-31-15h62v38q0 2-2 2h-58q-2 0-2-2z" fill="#82d6fa"/><path d="M-11-12H3l8 8v21h-22zM3-12v8h8" fill="none" stroke="#4ea5d2" stroke-width="2"/></svg>
    <svg viewBox="-36 -42 73 90"><path d="M-20-32h34v12h-34z" fill="#fbfbfb" stroke="#999" stroke-width=".6"/><rect x="-29" y="-25" width="58" height="57" rx="2" fill="#eceded"/><path d="M-25-16h51v37h-51z" fill="#fff" stroke="#666" stroke-width="1.500"/><path d="M-25-16h51v5h-51z" fill="#a23a8c"/><path d="M-22-7h10M-22-4h13M-22-1h9M-22 2h7M-22 5h12M-22 8h10M-22 11h17" stroke="#222"/><text x="12" y="-4" class="nut">Nutrition</text><path d="M1-1h24v22H1z" fill="#d8d2c8"/><circle cx="15" cy="7" r="10" fill="#2a3050"/><path d="M5 12q12 6 20-2l-2 10H6z" fill="#c7a97a"/></svg>
    <svg viewBox="-36 -42 73 90"><path d="M-24-26l4 50q1 6 20 6t20-6l4-50z" fill="#e0e3e7"/><path d="M-20-18l3 42M-8-16l2 44M8-16L6 28M20-18l-3 42" stroke="#f7f8fa" stroke-width="4" opacity=".6"/><ellipse cy="-25" rx="24" ry="5.500" fill="#c9ced4" stroke="#f4f6f8" stroke-width="1.500"/><path d="M-20-28l9-5 8 4 9-5 12 6-5 8-9 4-8-5-8 3z" fill="#f6f6f4"/><path d="M-14-30l5 7M-3-29l-4 8M8-31l3 8M15-28l-4 6M-18-26l5 4" stroke="#3c4148" stroke-width="2"/><path d="M-4-24l5-3" stroke="#3ccf9a" stroke-width="3"/></svg>
  </footer>
</div>
</body>
</html>
```
FILE: styles.css
```css
* { box-sizing: border-box; }
body { margin: 0; text-rendering: geometricPrecision; }
svg { display: block; overflow: visible; flex: none; }
i { font-style: normal; }

.desktop {
  width: 2560px; height: 1600px; overflow: hidden;
  background: linear-gradient(#45669a, #44659a 70%, #4a74ad);
  font-family: Inter, "Liberation Sans", sans-serif;
}

/* system menu bar */
.menubar {
  height: 44px;
  display: grid;
  grid-template-columns: 67px 146px 80px 88px 99px 129px 181px 127px 139px 368px 71px 68px 66px 60px 62px 71px 82px 196px 215px 65px 56px 60px;
  align-items: center;
  padding-left: 42px;
  white-space: nowrap;
  font-size: 27.500px; line-height: 44px; color: #22303f;
  background: linear-gradient(90deg, #d4e3f5 560px, #efe6e3 830px, #f8f6f3 1060px, #fafaf6 1680px, #eff3f6 1800px, #d5e3f4 1960px);
}
.apple { margin-top: -3px; }
.app { font-weight: 700; }
.mid { color: #3a3434; letter-spacing: -.2px; }
.warm, .pct { color: #413d3b; letter-spacing: -.2px; }
.pct { font-size: 24px; }
.user { font-weight: 500; letter-spacing: 0; }
.seam {
  height: 2px;
  background: linear-gradient(90deg, #34537e 662px, #a09a94 662px 671px, #2c1c1e 671px, #3c1c20 1000px, #8b7d72 1200px, #a5a39a 1898px, #34537e 1898px);
}

/* browser window */
.window { width: 2538px; height: 1460px; border-radius: 0 10px 14px 0; overflow: hidden; background: #f2f2f2; }
.tabstrip {
  height: 74px; display: flex; position: relative;
  background: linear-gradient(#8b9199, #8b9199) bottom / 100% 1.500px no-repeat,
    linear-gradient(90deg, #c1cbd8 500px, #cdc3c0 860px, #d0ccc9 1300px, #d4d4d2 1680px, #c1ccda 1900px, #c2ccda);
}
.lights { width: 132px; display: flex; gap: 16px; padding: 26px 0 0 12px; }
.lights i { width: 24px; height: 24px; border-radius: 50%; border: 1px solid; }
.lights .red { background: #fd5f59; border-color: #e0443e; }
.lights .yellow { background: #fdbd40; border-color: #dfa023; }
.lights .green { background: #34c84a; border-color: #24a932; }
.tab { position: relative; width: 431px; flex: none; display: flex; padding: 30px 0 0 32px; }
.t1 { z-index: 4; } .t2 { z-index: 3; } .t3 { z-index: 2; } .t4 { z-index: 1; } .t5 { z-index: 5; }
.shape { position: absolute; left: 0; top: 17px; width: 460px; height: 56px; z-index: -1; }
.shape path { fill: #cfcfcf; stroke: #979ba0; stroke-width: 1.500; }
.active .shape { height: 57px; }
.active .shape path { fill: #f2f2f2; }
.fav { width: 32px; height: 32px; flex: none; }
.title { width: 319px; margin-left: 12px; font-size: 24px; line-height: 32px; letter-spacing: -.1px; color: #000; white-space: nowrap; overflow: hidden; }
.t5 .title { letter-spacing: 0; }
.fade { -webkit-mask-image: linear-gradient(90deg, #000 84%, transparent 103%); mask-image: linear-gradient(90deg, #000 84%, transparent 103%); }
.close { width: 16px; height: 16px; margin: 8px 0 0 13px; stroke: #4a4a4a; stroke-width: 2; }
.newtab { margin: 32px 0 0 22px; }
.profile { display: flex; margin: 27px 0 0 21px; gap: 12px; font-size: 24px; line-height: 24px; letter-spacing: -.3px; }

.toolbar { height: 68px; display: flex; }
.omnibox {
  width: 2244px; height: 54px; margin-top: 9px; display: flex; align-items: center;
  background: #fff; border: 1.500px solid #b4b4b4; border-radius: 6px;
  font-size: 27.500px; letter-spacing: -.08px; white-space: nowrap; padding-left: 12px;
}
.secure { color: #5f6368; width: 155px; margin-left: 11px; letter-spacing: -.2px; }
.bar { width: 1.500px; height: 32px; background: #b8b8b8; }
.url { margin-left: 12.500px; color: #7d7d7d; flex: 1; }
.url b { font-weight: 400; color: #000; }
.star { margin-right: 13px; }
.gear { margin: 20px 0 0 21px; }
.dots { margin: 21px 0 0 28px; }

.bookmarks {
  height: 52px; display: grid; align-items: center;
  grid-template-columns: 37px 87px 37px 251px 39px 276px 32px 94px 40px 267px 40px 268px 40px 160px 41px 267px 42px 470px 20px;
  padding-left: 15px; padding-bottom: 5px;
  border-bottom: 1.500px solid #b2b2b2; white-space: nowrap; font-size: 24px; color: #000;
}
.bookmarks .tight { letter-spacing: -.2px; }
.bookmarks .loose { letter-spacing: .25px; }
.bookmarks .mgr { letter-spacing: .15px; }
.cms { font: 700 9px "Open Sans", sans-serif; fill: #fff; text-anchor: middle; }
.kay { font: italic 700 43px "Liberation Sans", sans-serif; fill: #ccc; }

/* page */
.viewport { height: 1266px; display: flex; }
.page { width: 2508px; background: #333; }
.masthead { height: 232px; background: #f0f0f0; border-bottom: 4px solid #000; display: flex; color: #111; }
.logo { margin: 58px 0 0 87px; }
.masthead h1 {
  width: 1511px; margin: 0 0 0 606px; display: flex; white-space: nowrap;
  font: 400 158px/180px "Liberation Serif", serif; font-variant: small-caps; padding-top: 21px;
  -webkit-text-stroke: 1.200px #111;
}
.w1, .w2, .w3, .menu span { display: block; transform-origin: 0 50%; }
.w1 { width: 224px; transform: scaleX(.94); }
.w2 { width: 276px; transform: scaleX(.975); }
.w3 { transform: scaleX(.934); }
.plus { margin-top: 68px; }
.spread { height: 1034px; position: relative; display: flex; }
.about { width: 1246px; padding: 104px 0 0 126px; color: #000; font: 26.430px/40px "Open Sans", sans-serif; }
.about h2, .about h3 { width: 868px; margin: 0 0 0 76px; text-align: center; font-family: "Liberation Serif", serif; font-style: italic; font-weight: 400; white-space: nowrap; }
.about h2 { font-size: 109px; line-height: 137px; height: 158px; }
.about h3 { font-size: 50px; line-height: 110px; height: 120px; border: solid #000; border-width: 4px 0; }
.about p { margin: 38px 0 54px; white-space: nowrap; }
.spine { width: 4px; background: #000; }
.spine i { display: block; position: relative; left: -27px; top: 288px; width: 58px; height: 58px; border: 4px solid #000; border-radius: 50%; background: #333; }
.menu { position: absolute; left: 744px; top: 197px; width: 1008px; margin: 0; padding: 0; list-style: none; }
.menu li {
  height: 140.700px; display: flex; justify-content: space-between; align-items: flex-end; padding: 0 12px 17px 10px;
  border-bottom: 2px solid #e8e4e8; color: #fff; font: 700 42px/48px "Liberation Serif", serif;
}
.menu .l1 { transform: scaleX(.93); }
.menu .l2 { transform: scaleX(.89); }
.menu .l3 { transform: scaleX(.87); }
.menu .l4 { transform: scaleX(.925); }
.menu .num { transform: scaleX(.95); transform-origin: 100% 50%; }
.menu .wide { transform: scaleX(1.010); }
.scrollbar { width: 30px; background: #fafafa; border-left: 2px solid #e6e6e6; padding: 98px 0 0 6px; }
.scrollbar i { display: block; width: 16px; height: 94px; border-radius: 8px; background: #c1c1c1; }

/* dock */
.backdrop {
  height: 4px;
  background: linear-gradient(90deg, #2c4262 662px, #8f8a85 662px 671px, #5f574c 671px, #6a5a50 1000px, #2e1d18 1050px, #7a6a68 1120px, #5b2730 1250px, #6b6462 1310px, #6a0c26 1340px, #8a2444 1700px, #5e0818 1880px, #8f8a85 1889px 1897px, #2c4262 1897px);
}
.dock {
  width: 2452px; height: 90px; margin-left: 54px; padding-left: 6px; display: flex;
  border-radius: 12px 12px 0 0;
  background: linear-gradient(90deg, #6b92ca 520px, #8f9cb4 620px, #c6b6a6 760px, #d2b6a8 980px, #e09bb2 1120px, #ea82ac 1240px, #ee6c98 1420px, #ee6c9a 1640px, #e478a4 1740px, #a886b4 1830px, #6c8fc8 1920px);
}
.dock svg { width: 72.900px; height: 90px; }
.divider { width: 2px; height: 66px; margin: 12px 14px 0 17px; background: #4a70ad; }
.office { stroke: #f3eef6; stroke-width: 1.300; }
.office .dot { stroke: none; }
.badge { font: 20px Inter, sans-serif; fill: #fff; text-anchor: middle; }
.at { font: 12px Inter, sans-serif; }
.sep { font: 10px Inter, sans-serif; fill: #fff; text-anchor: middle; }
.day { font: 300 31px Inter, sans-serif; fill: #222; text-anchor: middle; }
.aa { font: 30px "Liberation Serif", serif; fill: #6f9fe0; text-anchor: middle; }
.i280 { font: 700 7px Inter, sans-serif; fill: #fff; text-anchor: middle; }
.d3 { font: 9.500px Inter, sans-serif; fill: #333; text-anchor: middle; }
.nut { font: 7px Inter, sans-serif; fill: #b0489a; text-anchor: middle; }
```
